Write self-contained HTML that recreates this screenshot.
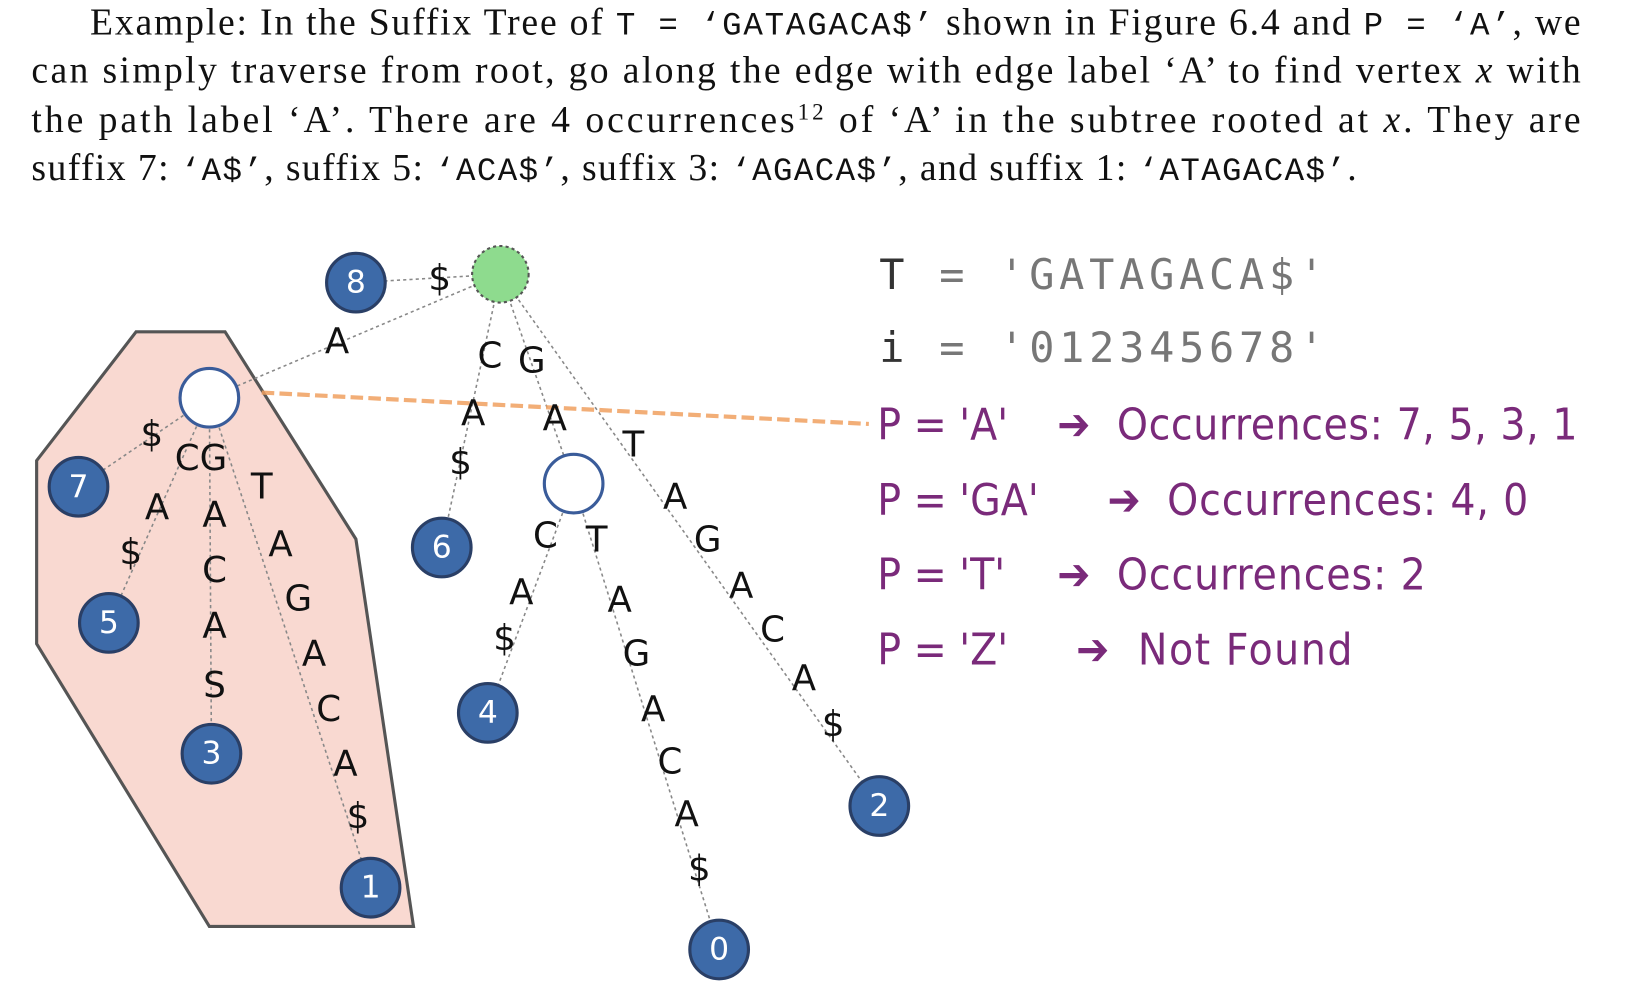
<!DOCTYPE html>
<html><head><meta charset="utf-8"><style>
html,body{margin:0;padding:0;background:#fff;width:1633px;height:995px;overflow:hidden}
svg{display:block}
.p{font-family:"Liberation Serif",serif;font-size:36px;fill:#111}
.m{font-family:"Liberation Mono",monospace;font-size:31px}
.n{font-family:"DejaVu Sans",sans-serif;font-size:30px;fill:#fff;text-anchor:middle;dominant-baseline:central}
.l{font-family:"DejaVu Sans",sans-serif;font-size:34px;fill:#111;text-anchor:middle;dominant-baseline:central}
.r{font-family:"DejaVu Sans Condensed","DejaVu Sans",sans-serif;font-size:42px;fill:#7a2a7a}
.r2{font-family:"DejaVu Sans Mono",monospace;font-size:40px;fill:#777}
</style></head><body>
<svg width="1633" height="995" viewBox="0 0 1560 950.5" xmlns="http://www.w3.org/2000/svg">
<text class="p" x="86" y="33" textLength="1424" lengthAdjust="spacing">Example: In the Suffix Tree of <tspan class="m">T = ‘GATAGACA$’</tspan> shown in Figure 6.4 and <tspan class="m">P = ‘A’</tspan>, we</text>
<text class="p" x="30" y="79" textLength="1480" lengthAdjust="spacing">can simply traverse from root, go along the edge with edge label ‘A’ to find vertex <tspan font-style="italic">x</tspan> with</text>
<text class="p" x="30" y="126" textLength="1480" lengthAdjust="spacing">the path label ‘A’. There are 4 occurrences<tspan font-size="22" dy="-12">12</tspan><tspan dy="12"> of ‘A’ in the subtree rooted at </tspan><tspan font-style="italic">x</tspan>. They are</text>
<text class="p" x="30" y="172" textLength="1266" lengthAdjust="spacing">suffix 7: <tspan class="m">‘A$’</tspan>, suffix 5: <tspan class="m">‘ACA$’</tspan>, suffix 3: <tspan class="m">‘AGACA$’</tspan>, and suffix 1: <tspan class="m">‘ATAGACA$’</tspan>.</text>

<polygon points="130,317 215,317 340,515 395,885 200,885 35,615 35,440" fill="#f9d9d1" stroke="#555" stroke-width="3"/>
<g stroke="#888" stroke-width="1.5" stroke-dasharray="3,3" fill="none">
<line x1="478" y1="262" x2="340" y2="270"/>
<line x1="478" y1="262" x2="200" y2="380"/>
<line x1="478" y1="262" x2="422" y2="523"/>
<line x1="478" y1="262" x2="548" y2="462"/>
<line x1="478" y1="262" x2="840" y2="770"/>
<line x1="200" y1="380" x2="75" y2="465"/>
<line x1="200" y1="380" x2="104" y2="595"/>
<line x1="200" y1="380" x2="202" y2="720"/>
<line x1="200" y1="380" x2="354" y2="848"/>
<line x1="548" y1="462" x2="466" y2="681"/>
<line x1="548" y1="462" x2="687" y2="907"/>
</g>
<line x1="250" y1="375" x2="830" y2="405" stroke="#f0a060" stroke-width="4" stroke-dasharray="12,5" opacity="0.85"/>
<circle cx="478" cy="262" r="27" fill="#8edb8e" stroke="#555" stroke-width="2" stroke-dasharray="3,3"/>
<circle cx="200" cy="380" r="28" fill="#fff" stroke="#3a5c9a" stroke-width="3"/>
<circle cx="548" cy="462" r="28" fill="#fff" stroke="#3a5c9a" stroke-width="3"/>
<g fill="#3d6aa8" stroke="#2a3f66" stroke-width="3">
<circle cx="340" cy="270" r="28"/><circle cx="75" cy="465" r="28"/><circle cx="104" cy="595" r="28"/>
<circle cx="202" cy="720" r="28"/><circle cx="354" cy="848" r="28"/><circle cx="422" cy="523" r="28"/>
<circle cx="466" cy="681" r="28"/><circle cx="687" cy="907" r="28"/><circle cx="840" cy="770" r="28"/>
</g>
<text class="n" x="340" y="270">8</text><text class="n" x="75" y="465">7</text><text class="n" x="104" y="595">5</text>
<text class="n" x="202" y="720">3</text><text class="n" x="354" y="848">1</text><text class="n" x="422" y="523">6</text>
<text class="n" x="466" y="681">4</text><text class="n" x="687" y="907">0</text><text class="n" x="840" y="770">2</text>

<g>
<text class="l" x="420" y="266" font-size="24">$</text>
<text class="l" x="322" y="326">A</text>
<text class="l" x="468" y="340">C</text><text class="l" x="508" y="345">G</text>
<text class="l" x="452" y="395">A</text><text class="l" x="440" y="442">$</text>
<text class="l" x="530" y="400">A</text>
<text class="l" x="605" y="425">T</text><text class="l" x="645" y="475">A</text><text class="l" x="676" y="516">G</text>
<text class="l" x="708" y="560">A</text><text class="l" x="738" y="602">C</text><text class="l" x="768" y="648">A</text><text class="l" x="796" y="692">$</text>
<text class="l" x="521" y="512">C</text><text class="l" x="570" y="516">T</text>
<text class="l" x="498" y="566">A</text><text class="l" x="482" y="610">$</text>
<text class="l" x="592" y="573">A</text><text class="l" x="608" y="625">G</text><text class="l" x="624" y="678">A</text>
<text class="l" x="640" y="728">C</text><text class="l" x="656" y="778">A</text><text class="l" x="668" y="830">$</text>
<text class="l" x="145" y="415">$</text>
<text class="l" x="192" y="438">CG</text>
<text class="l" x="150" y="485">A</text><text class="l" x="125" y="528">$</text>
<text class="l" x="205" y="492">A</text><text class="l" x="205" y="545">C</text><text class="l" x="205" y="598">A</text><text class="l" x="205" y="655">S</text>
<text class="l" x="250" y="465">T</text><text class="l" x="268" y="520">A</text><text class="l" x="285" y="572">G</text>
<text class="l" x="300" y="625">A</text><text class="l" x="314" y="678">C</text><text class="l" x="330" y="730">A</text><text class="l" x="342" y="780">$</text>
</g>

<text class="r2" x="840" y="276" textLength="425" lengthAdjust="spacing"><tspan fill="#333">T</tspan> = 'GATAGACA$'</text>
<text class="r2" x="840" y="346" textLength="425" lengthAdjust="spacing"><tspan fill="#333">i</tspan> = '012345678'</text>
<g class="r">
<text x="838" y="420">P = 'A'</text><text x="1010" y="420">➔</text><text x="1067" y="420" textLength="440" lengthAdjust="spacing">Occurrences: 7, 5, 3, 1</text>
<text x="838" y="492">P = 'GA'</text><text x="1058" y="492">➔</text><text x="1115" y="492" textLength="345" lengthAdjust="spacing">Occurrences: 4, 0</text>
<text x="838" y="563">P = 'T'</text><text x="1010" y="563">➔</text><text x="1067" y="563" textLength="295" lengthAdjust="spacing">Occurrences: 2</text>
<text x="838" y="635">P = 'Z'</text><text x="1028" y="635">➔</text><text x="1087" y="635" textLength="205" lengthAdjust="spacing">Not Found</text>
</g>
</svg>
</body></html>
